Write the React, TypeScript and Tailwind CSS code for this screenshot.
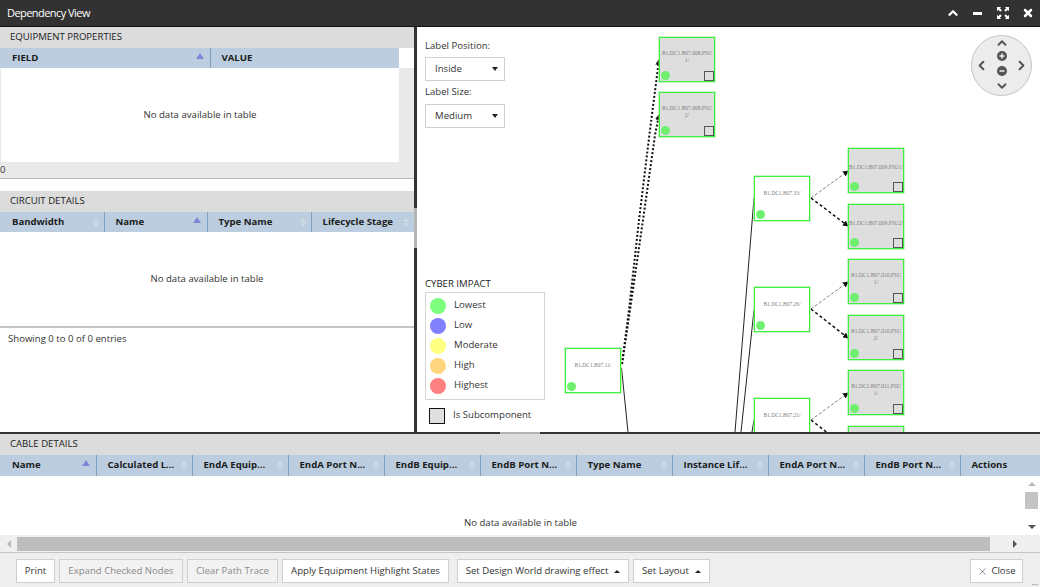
import { ChevronUp, ChevronDown, ChevronLeft, ChevronRight, X } from "lucide-react";

const SortIcon = ({ active }: { active?: boolean }) => {
  if (active) {
    return <span className="absolute right-[6px] top-[5px] w-0 h-0 border-x-[4px] border-x-transparent border-b-[6px] border-b-[#7f86d8]" />;
  }
  return (
    <span className="absolute right-[5px] top-[6px] flex flex-col gap-[1px]">
      <span className="w-0 h-0 border-x-[3.5px] border-x-transparent border-b-[4px] border-b-[#cfdae4]" />
      <span className="w-0 h-0 border-x-[3.5px] border-x-transparent border-t-[4px] border-t-[#cfdae4]" />
    </span>
  );
};

const HeadCell = ({ label, width, active, noSort, last, first }: { label: string; width: string; active?: boolean; noSort?: boolean; last?: boolean; first?: boolean }) => (
  <div className={`relative h-full flex items-center font-bold text-[9.6px] text-[#1c1c1c] ${first ? "pl-[12px]" : "pl-[10.5px]"} ${width} ${last ? "" : "border-r border-[#7f9fbf]"}`}>
    {label}
    {noSort ? null : <SortIcon active={active} />}
  </div>
);

const SectionTitle = ({ children }: { children: string }) => (
  <div className="h-[21px] shrink-0 bg-[#dcdcdc] flex items-center pl-[10px] text-[9.6px] text-[#222]">{children}</div>
);

const NoData = ({ className }: { className: string }) => (
  <div className={`bg-white flex justify-center text-[9.6px] text-[#333] ${className}`}>No data available in table</div>
);

const Node = ({ label, pos, sub }: { label: string; pos: string; sub?: boolean }) => {
  const twoLines = label.includes("\n");
  return (
    <div className={`absolute w-[56px] h-[45px] border border-[#3df03d] shadow-[0_0_0_0.5px_#8af08a] ${sub ? "bg-[#dedede]" : "bg-white"} ${pos}`}>
      <div className={`text-center whitespace-pre-line font-["Liberation_Serif",serif] text-[5.5px] leading-[7px] text-[#808080] ${twoLines ? "mt-[12px]" : sub ? "mt-[15px]" : "mt-[13px]"}`}>{label}</div>
      <span className="absolute left-[1px] bottom-[1px] w-[9px] h-[9px] rounded-full bg-[#6ef06e]" />
      {sub ? <span className="absolute right-0 bottom-0 w-[10px] h-[10px] border-[1.5px] border-[#555] bg-[#dedede]" /> : null}
    </div>
  );
};

const Legend = ({ label, color }: { label: string; color: string }) => (
  <div className="flex items-center h-[20px]">
    <span className={`w-[16px] h-[16px] rounded-full ${color}`} />
    <span className="ml-[8px] mb-[1px] text-[9.6px] text-[#333]">{label}</span>
  </div>
);

const Btn = ({ label, disabled, caret, className }: { label: string; disabled?: boolean; caret?: boolean; className: string }) => (
  <div className={`h-[24px] flex items-center justify-center gap-[6px] border border-[#cfcfcf] text-[9.6px] ${disabled ? "bg-[#f2f2f2] text-[#8a8a8a]" : "bg-white text-[#333]"} ${className}`}>
    {label}
    {caret ? <span className="w-0 h-0 border-x-[3.5px] border-x-transparent border-b-[3.5px] border-b-[#222]" /> : null}
  </div>
);

const Select = ({ value }: { value: string }) => (
  <div className="w-[80px] h-[24px] border border-[#cfcfcf] bg-white flex items-center justify-between pl-[9px] pr-[6px] text-[9.6px] text-[#333]">
    {value}
    <span className="w-0 h-0 border-x-[3.5px] border-x-transparent border-t-[4px] border-t-[#222]" />
  </div>
);

const Edges = () => (
  <svg className="absolute inset-0" width="623" height="405" viewBox="417 27 623 405" fill="none">
    <defs>
      <marker id="arrow" markerUnits="userSpaceOnUse" markerWidth="6" markerHeight="6" refX="5" refY="3" orient="auto">
        <path d="M0 0L6 3L0 6z" fill="#111" />
      </marker>
    </defs>
    <path d="M622 364L629 310L639 220L650 130L659 60" stroke="#111" strokeWidth="2" strokeDasharray="2 2" markerEnd="url(#arrow)" />
    <path d="M622 364L630 310L643 220L655 135L659 115" stroke="#111" strokeWidth="2" strokeDasharray="2 2" markerEnd="url(#arrow)" />
    <path d="M621.5 368L628 432" stroke="#222" />
    <path d="M735 432L754 198" stroke="#222" />
    <path d="M741 432L754 310" stroke="#222" />
    <path d="M752 432L754 420" stroke="#222" />
    <path d="M811 198L848 171" stroke="#444" strokeWidth="0.7" strokeDasharray="3 2" markerEnd="url(#arrow)" />
    <path d="M811 198L848 226" stroke="#111" strokeWidth="1.5" strokeDasharray="3 2.5" markerEnd="url(#arrow)" />
    <path d="M811 309L848 282" stroke="#444" strokeWidth="0.7" strokeDasharray="3 2" markerEnd="url(#arrow)" />
    <path d="M811 309L848 338" stroke="#111" strokeWidth="1.5" strokeDasharray="3 2.5" markerEnd="url(#arrow)" />
    <path d="M811 420L848 393" stroke="#444" strokeWidth="0.7" strokeDasharray="3 2" markerEnd="url(#arrow)" />
    <path d="M811 420L848 449" stroke="#111" strokeWidth="1.5" strokeDasharray="3 2.5" markerEnd="url(#arrow)" />
  </svg>
);

const ZoomPad = () => (
  <div className="absolute right-[8px] top-[8px] w-[61px] h-[61px] rounded-full bg-[#ececec] border border-[#c4c4c4] flex flex-col items-center text-[#555]">
    <ChevronUp size={14} strokeWidth={3.2} />
    <svg width="10" height="10" viewBox="0 0 10 10" className="mt-[1px]">
      <circle cx="5" cy="5" r="5" fill="#555" />
      <path d="M2.5 5h5M5 2.5v5" stroke="#ececec" strokeWidth="1.5" />
    </svg>
    <svg width="10" height="10" viewBox="0 0 10 10" className="mt-[5px]">
      <circle cx="5" cy="5" r="5" fill="#555" />
      <path d="M2.5 5h5" stroke="#ececec" strokeWidth="1.5" />
    </svg>
    <ChevronDown size={14} strokeWidth={3.2} className="mt-[3px]" />
    <ChevronLeft size={15} strokeWidth={3.2} className="absolute left-[2px] top-[22px]" />
    <ChevronRight size={15} strokeWidth={3.2} className="absolute right-[2px] top-[22px]" />
  </div>
);

export default function App() {
  return (
    <div className={`w-[1040px] h-[587px] flex flex-col overflow-hidden bg-white font-["Open_Sans",sans-serif]`}>
      {/* title bar */}
      <div className="h-[27px] shrink-0 bg-[#323232] border-b border-[#111] flex items-center justify-between pl-[7px] text-white">
        <span className="text-[11px] tracking-[-0.55px]">Dependency View</span>
        <div className="flex items-center">
          <span className="w-[25px] flex justify-center"><ChevronUp size={14} strokeWidth={4} /></span>
          <span className="w-[25px] flex justify-center"><span className="w-[9px] h-[3px] bg-white" /></span>
          <span className="w-[25px] flex justify-center">
            <svg width="12" height="12" viewBox="0 0 13 13" fill="white">
              <path d="M0 0h4.5L3.2 1.4l2 2-1.7 1.7-2-2L0 4.5zM13 0v4.5l-1.4-1.4-2 2-1.7-1.7 2-2L8.5 0zM0 13V8.5l1.4 1.4 2-2 1.7 1.7-2 2L4.5 13zM13 13H8.5l1.4-1.4-2-2 1.7-1.7 2 2L13 8.5z" />
            </svg>
          </span>
          <span className="w-[25px] flex justify-center"><X size={12} strokeWidth={5} /></span>
        </div>
      </div>

      <div className="h-[405px] shrink-0 flex">
        {/* left panels */}
        <div className="w-[414px] shrink-0 flex flex-col">
          <SectionTitle>EQUIPMENT PROPERTIES</SectionTitle>
          <div className="h-[114px] shrink-0 flex bg-[#e9e9e9]">
            <div className="w-[399px] flex flex-col">
              <div className="h-[20px] flex bg-[#bbcdde]">
                <HeadCell label="FIELD" width="w-[211px]" active first />
                <HeadCell label="VALUE" width="flex-1" noSort last />
              </div>
              <NoData className="h-[94px] ml-[1px] pt-[40px]" />
            </div>
            <div className="flex-1 h-[20px] bg-white" />
          </div>
          <div className="h-[16px] shrink-0 bg-[#e9e9e9] text-[9.6px] text-[#333] leading-[16px]">0</div>
          <div className="h-[13px] shrink-0 border-t border-[#b8b8b8]" />
          <SectionTitle>CIRCUIT DETAILS</SectionTitle>
          <div className="h-[20px] shrink-0 flex bg-[#bbcdde]">
            <HeadCell label="Bandwidth" width="w-[105px]" first />
            <HeadCell label="Name" width="w-[103px]" active />
            <HeadCell label="Type Name" width="w-[104px]" />
            <HeadCell label="Lifecycle Stage" width="flex-1" last />
          </div>
          <NoData className="h-[94px] shrink-0 pt-[40px]" />
          <div className="flex-1 border-t-2 border-[#c4c4c4] pl-[8px] pt-[4px] text-[9.6px] text-[#333]">Showing 0 to 0 of 0 entries</div>
        </div>

        {/* splitter */}
        <div className="w-[3px] shrink-0 bg-[#333] flex flex-col pt-[181px]">
          <div className="h-[40px] bg-[#b4b4b4]" />
        </div>

        {/* diagram */}
        <div className="relative flex-1 overflow-hidden bg-white">
          <Edges />
          <Node label={"B1.DC1.B07.008.PSU\n1/"} pos="left-[242px] top-[10px]" sub />
          <Node label={"B1.DC1.B07.008.PSU\n2/"} pos="left-[242px] top-[65px]" sub />
          <Node label="B1.DC1.B07.33/" pos="left-[337px] top-[149px]" />
          <Node label="B1.DC1.B07.009.PSU1/" pos="left-[431px] top-[121px]" sub />
          <Node label="B1.DC1.B07.009.PSU2/" pos="left-[431px] top-[177px]" sub />
          <Node label="B1.DC1.B07.26/" pos="left-[337px] top-[260px]" />
          <Node label={"B1.DC1.B07.010.PSU\n1/"} pos="left-[431px] top-[232px]" sub />
          <Node label={"B1.DC1.B07.010.PSU\n2/"} pos="left-[431px] top-[288px]" sub />
          <Node label="B1.DC1.B07.21/" pos="left-[337px] top-[371px]" />
          <Node label={"B1.DC1.B07.011.PSU\n1/"} pos="left-[431px] top-[343px]" sub />
          <Node label="" pos="left-[431px] top-[399px]" sub />
          <Node label="B1.DC1.B07.11/" pos="left-[148px] top-[321px]" />

          <div className="absolute left-[8px] top-[12px] text-[9.6px] text-[#333] flex flex-col">
            <span className="leading-[14px]">Label Position:</span>
            <div className="mt-[4px]"><Select value="Inside" /></div>
            <span className="leading-[14px] mt-[4px]">Label Size:</span>
            <div className="mt-[5px]"><Select value="Medium" /></div>
          </div>

          <div className="absolute left-[8px] top-[250px] flex flex-col">
            <span className="text-[9.6px] leading-[14px] text-[#222]">CYBER IMPACT</span>
            <div className="mt-[1px] w-[120px] h-[108px] border border-[#d4d4d4] px-[4px] py-[3px] flex flex-col">
              <Legend label="Lowest" color="bg-[#7dff7d]" />
              <Legend label="Low" color="bg-[#8080ff]" />
              <Legend label="Moderate" color="bg-[#ffff80]" />
              <Legend label="High" color="bg-[#ffd580]" />
              <Legend label="Highest" color="bg-[#ff8080]" />
            </div>
            <div className="mt-[8px] ml-[4px] flex items-center">
              <span className="w-[16px] h-[16px] border border-[#111] bg-[#e0e0e0]" />
              <span className="ml-[8px] mb-[1px] text-[9.6px] text-[#333]">Is Subcomponent</span>
            </div>
          </div>

          <ZoomPad />
        </div>
      </div>

      {/* horizontal splitter */}
      <div className="h-[2px] shrink-0 bg-[#333] pl-[500px]">
        <div className="w-[40px] h-full bg-[#b4b4b4]" />
      </div>

      {/* cable details */}
      <SectionTitle>CABLE DETAILS</SectionTitle>
      <div className="h-[21px] shrink-0 flex bg-[#bbcdde]">
        <HeadCell label="Name" width="w-[97px]" active first />
        <HeadCell label="Calculated L..." width="w-[96px]" />
        <HeadCell label="EndA Equip..." width="w-[96px]" />
        <HeadCell label="EndA Port N..." width="w-[96px]" />
        <HeadCell label="EndB Equip..." width="w-[96px]" />
        <HeadCell label="EndB Port N..." width="w-[96px]" />
        <HeadCell label="Type Name" width="w-[96px]" />
        <HeadCell label="Instance Lif..." width="w-[96px]" />
        <HeadCell label="EndA Port N..." width="w-[96px]" />
        <HeadCell label="EndB Port N..." width="w-[96px]" />
        <HeadCell label="Actions" width="flex-1" noSort last />
      </div>
      <div className="h-[59px] shrink-0 flex bg-white">
        <NoData className="flex-1 items-end pb-[5px] pl-[18px]" />
        <div className="w-[17px] flex flex-col items-center pt-[6px]">
          <span className="w-0 h-0 border-x-[4px] border-x-transparent border-b-[4px] border-b-[#b8b8b8]" />
          <span className="mt-[6px] w-[13px] h-[17px] bg-[#c4c4c4]" />
          <span className="mt-auto mb-[6px] w-0 h-0 border-x-[4px] border-x-transparent border-t-[4px] border-t-[#555]" />
        </div>
      </div>

      {/* horizontal scrollbar */}
      <div className="h-[17px] shrink-0 flex items-center bg-[#efefef]">
        <div className="w-[17px] flex justify-center">
          <span className="w-0 h-0 border-y-[4px] border-y-transparent border-r-[4px] border-r-[#b8b8b8]" />
        </div>
        <div className="w-[973px] h-[14px] bg-[#bdbdbd]" />
        <div className="flex-1 flex pl-[23px]">
          <span className="w-0 h-0 border-y-[4px] border-y-transparent border-l-[4px] border-l-[#555]" />
        </div>
      </div>

      {/* footer */}
      <div className="relative flex-1 bg-[#eeeeee] border-t border-[#c4c4c4] flex items-start pt-[6px] pl-[16px] pr-[17px] gap-[4px]">
        <Btn label="Print" className="w-[39px]" />
        <Btn label="Expand Checked Nodes" disabled className="w-[124px]" />
        <Btn label="Clear Path Trace" disabled className="w-[91px]" />
        <Btn label="Apply Equipment Highlight States" className="w-[167px]" />
        <Btn label="Set Design World drawing effect" caret className="w-[172px] ml-[4px]" />
        <Btn label="Set Layout" caret className="w-[77px]" />
        <div className="ml-auto w-[53px] h-[24px] flex items-center justify-center gap-[3px] border border-[#cfcfcf] bg-white text-[9.6px] text-[#333]">
          <X size={11} strokeWidth={1.2} />
          Close
        </div>
        <span className="absolute right-[2px] bottom-[1px] text-[8px] leading-none text-[#555]">...</span>
      </div>
    </div>
  );
}
